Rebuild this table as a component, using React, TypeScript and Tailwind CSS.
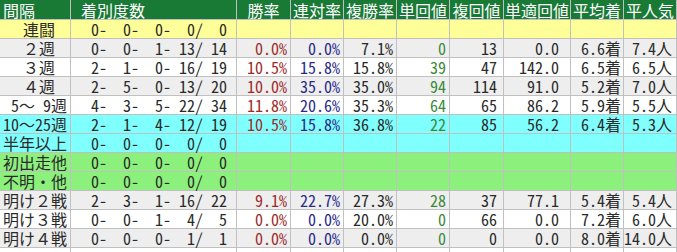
import React from "react";

type Row = {
  label: string;
  bg: string;
  rec: string;
  v: string[] | null;
};

const rows: Row[] = [
  { label: " 連闘", bg: "bg-[#ffff99]", rec: "  0-  0-  0-  0/  0", v: null },
  { label: " ２週", bg: "bg-[#eeeeee]", rec: "  0-  0-  1- 13/ 14", v: ["0.0%", "0.0%", "7.1%", "0", "13", "0.0", "6.6着", "7.4人"] },
  { label: " ３週", bg: "bg-white", rec: "  2-  1-  0- 16/ 19", v: ["10.5%", "15.8%", "15.8%", "39", "47", "142.0", "6.5着", "6.5人"] },
  { label: " ４週", bg: "bg-[#eeeeee]", rec: "  2-  5-  0- 13/ 20", v: ["10.0%", "35.0%", "35.0%", "94", "114", "91.0", "5.2着", "7.0人"] },
  { label: " 5～ 9週", bg: "bg-white", rec: "  4-  3-  5- 22/ 34", v: ["11.8%", "20.6%", "35.3%", "64", "65", "86.2", "5.9着", "5.5人"] },
  { label: "10～25週", bg: "bg-[#80ffff]", rec: "  2-  1-  4- 12/ 19", v: ["10.5%", "15.8%", "36.8%", "22", "85", "56.2", "6.4着", "5.3人"] },
  { label: "半年以上", bg: "bg-[#80ffff]", rec: "  0-  0-  0-  0/  0", v: null },
  { label: "初出走他", bg: "bg-[#8cf07c]", rec: "  0-  0-  0-  0/  0", v: null },
  { label: "不明・他", bg: "bg-[#8cf07c]", rec: "  0-  0-  0-  0/  0", v: null },
  { label: "明け２戦", bg: "bg-[#eeeeee]", rec: "  2-  3-  1- 16/ 22", v: ["9.1%", "22.7%", "27.3%", "28", "37", "77.1", "5.4着", "5.4人"] },
  { label: "明け３戦", bg: "bg-white", rec: "  0-  0-  1-  4/  5", v: ["0.0%", "0.0%", "20.0%", "0", "66", "0.0", "7.2着", "6.0人"] },
  { label: "明け４戦", bg: "bg-[#eeeeee]", rec: "  0-  0-  0-  1/  1", v: ["0.0%", "0.0%", "0.0%", "0", "0", "0.0", "8.0着", "14.0人"] },
  { label: "", bg: "bg-white", rec: "", v: null },
];

const valCls = [
  "text-[#a02a2a] pr-[3px]",
  "text-[#2a2a8c] pr-[3px]",
  "text-[#2a2a2a] pr-[3px]",
  "text-[#3a8a3a] pr-[3px]",
  "text-[#2a2a2a] pr-[6px]",
  "text-[#2a2a2a] pr-[11px]",
  "text-[#2a2a2a] pr-[2px]",
  "text-[#2a2a2a] pr-[4px]",
];

const headers = ["勝率", "連対率", "複勝率", "単回値", "複回値", "単適回値", "平均着", "平人気"];

const cell = "border-r border-b border-[#c0c0c0] h-[19px] leading-[19px] whitespace-pre";
const hcell = "border-r border-b border-[#c0c0c0] h-[20px] pt-[1px] leading-[18px] whitespace-pre bg-[#187a34] text-white";

export default function App() {
  return (
    <div className="w-[677px] bg-white font-['Noto_Sans_Mono_CJK_JP','Noto_Sans_CJK_JP',monospace] text-[16px] text-[#2a2a2a]">
      <div className="grid grid-cols-[71px_166px_54px_53px_53px_53px_54px_67px_53px_53px]">
        <div className={`${hcell} pl-[3px]`}>間隔</div>
        <div className={`${hcell} pl-[10px]`}>着別度数</div>
        {headers.map((h) => (
          <div key={h} className={`${hcell} text-center`}>
            {h}
          </div>
        ))}
        {rows.map((r, i) => (
          <React.Fragment key={i}>
            <div className={`${cell} ${r.bg} text-center`}>{r.label}</div>
            <div className={`${cell} ${r.bg} text-right pr-[9px]`}>{r.rec}</div>
            {Array.from({ length: 8 }).map((_, j) => (
              <div key={j} className={`${cell} ${r.bg} text-right ${valCls[j]}`}>
                {r.v ? r.v[j] : ""}
              </div>
            ))}
          </React.Fragment>
        ))}
      </div>
    </div>
  );
}
